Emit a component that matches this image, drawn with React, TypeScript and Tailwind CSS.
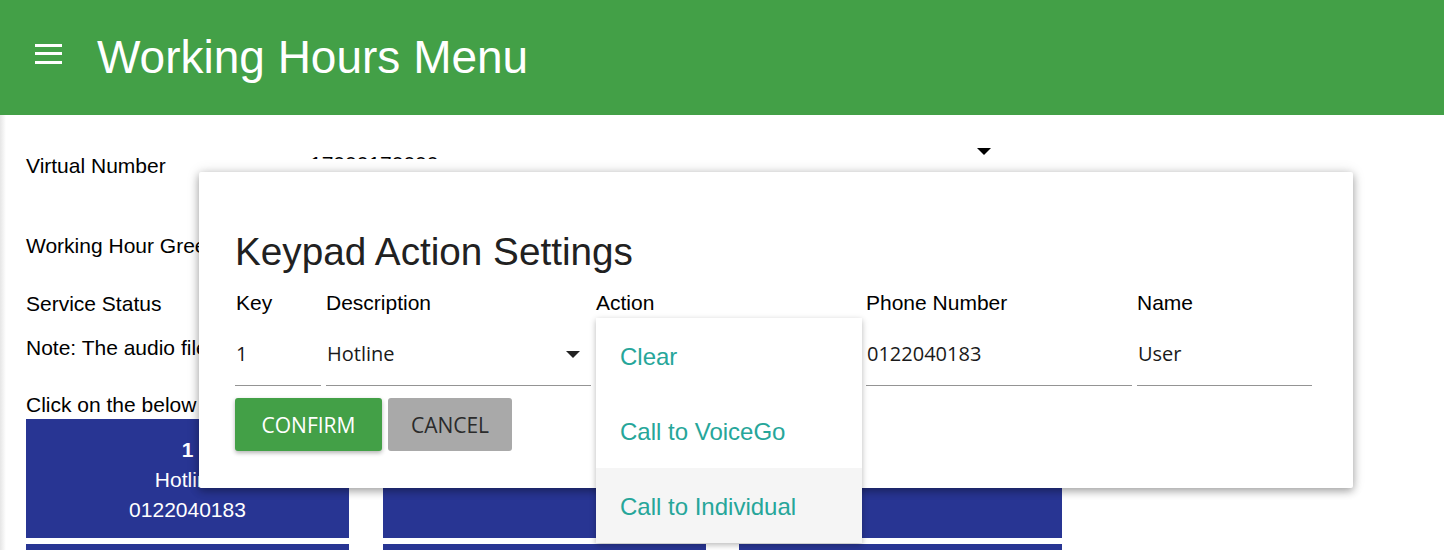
import { useState } from 'react';

const arial = { fontFamily: '"Liberation Sans", Arial, sans-serif' };
const segoe = { fontFamily: '"Open Sans", "Noto Sans", sans-serif' };

const tiles = [
  { key: '1', desc: 'Hotline', phone: '0122040183' },
  { key: '2', desc: '', phone: '' },
  { key: '3', desc: '', phone: '' },
  { key: '4', desc: '', phone: '' },
  { key: '5', desc: '', phone: '' },
  { key: '6', desc: '', phone: '' },
];

const actions = ['Clear', 'Call to VoiceGo', 'Call to Individual'];

const fields = [
  { v: '1', select: false },
  { v: 'Hotline', select: true },
  { v: '', select: false },
  { v: '0122040183', select: false },
  { v: 'User', select: false },
];

function Caret({ className }: { className: string }) {
  return <span className={`block w-0 h-0 border-x-[7px] border-x-transparent border-t-[7px] ${className}`} />;
}

export default function App() {
  const [hovered, setHovered] = useState(2);

  return (
    <div className="relative w-[1444px] h-[550px] overflow-hidden bg-white text-black" style={arial}>
      {/* App bar */}
      <header className="h-[115px] bg-[#43a047] flex items-center pl-[35px] pb-[2px]">
        <button className="-mt-[6px] flex flex-col gap-[5.5px] w-[27px]">
          <span className="h-[3px] bg-white" />
          <span className="h-[3px] bg-white" />
          <span className="h-[3px] bg-white" />
        </button>
        <h1 className="ml-[35px] text-[46px] leading-none text-white">Working Hours Menu</h1>
      </header>

      {/* drawer edge shadow */}
      <div className="absolute left-0 top-[115px] bottom-0 w-[6px] bg-gradient-to-r from-[#e6e6e6] to-white" />

      {/* Page content */}
      <main className="pl-[26px] pt-[39px] text-[21px] leading-[24px]">
        <div className="flex items-start h-[24px]">
          <span className="w-[284px]">Virtual Number</span>
          <div className="-mt-[2px] w-[660px] h-[7px] overflow-hidden">
            <span className="block leading-[24px]">17000170000</span>
          </div>
          <Caret className="-mt-[6px] ml-[7px] border-t-black" />
        </div>
        <p className="mt-[56px]">Working Hour Greeting</p>
        <p className="mt-[34px]">Service Status</p>
        <p className="mt-[20px]">Note: The audio file must be in .wav format</p>
        <p className="mt-[33px]">Click on the below keys to set up the keypad actions</p>

        <div className="mt-[2px] grid grid-cols-[323px_323px_323px] gap-x-[33.5px] gap-y-[6px]">
          {tiles.map(t => (
            <div key={t.key} className="h-[119px] bg-[#283593] text-white text-center pt-[16px] leading-[30px]">
              <div className="font-bold">{t.key}</div>
              <div>{t.desc}</div>
              <div>{t.phone}</div>
            </div>
          ))}
        </div>
      </main>

      {/* Dialog */}
      <div className="absolute left-[199px] top-[172px] w-[1154px] h-[316px] bg-white rounded-[2px] shadow-[0_3px_8px_rgba(0,0,0,0.32),0_0_14px_rgba(0,0,0,0.12)] px-[36px] pt-[58px]">
        <h2 className="text-[38.7px] leading-[44px] text-[#212121]">Keypad Action Settings</h2>

        <div className="mt-[17px] grid grid-cols-[86px_265px_265px_266px_175px] gap-x-[5px] text-[21px] leading-[24px]">
          <span className="pl-[1px]">Key</span>
          <span>Description</span>
          <span>Action</span>
          <span>Phone Number</span>
          <span>Name</span>

          {fields.map((f, i) => (
            <div
              key={i}
              className="h-[71px] pt-[8px] border-b border-[#949494] flex items-center justify-between text-[20px] text-[#1a1a1a]"
              style={segoe}
            >
              <span className="pl-[1px]">{f.v}</span>
              {f.select && <Caret className="mr-[11px] border-t-[#222]" />}
            </div>
          ))}
        </div>

        <div className="mt-[12px] flex gap-[6px] text-[21px]" style={segoe}>
          <button className="w-[147px] h-[53px] pt-[3px] rounded-[3px] bg-[#43a047] text-white shadow-[0_2px_4px_rgba(0,0,0,0.3)]">CONFIRM</button>
          <button className="w-[124px] h-[53px] pt-[3px] rounded-[3px] bg-[#a9a9a9] text-[#2b2b2b]">CANCEL</button>
        </div>
      </div>

      {/* Action dropdown menu */}
      <ul className="absolute left-[596px] top-[318px] w-[266px] bg-white shadow-[0_2px_6px_rgba(0,0,0,0.28)] text-[24px] text-[#26a69a]">
        {actions.map((a, i) => (
          <li
            key={a}
            onMouseEnter={() => setHovered(i)}
            className={`h-[75px] pt-[2px] flex items-center pl-[24px] cursor-pointer ${hovered === i ? 'bg-[#f5f5f5]' : ''}`}
          >
            {a}
          </li>
        ))}
      </ul>
    </div>
  );
}
